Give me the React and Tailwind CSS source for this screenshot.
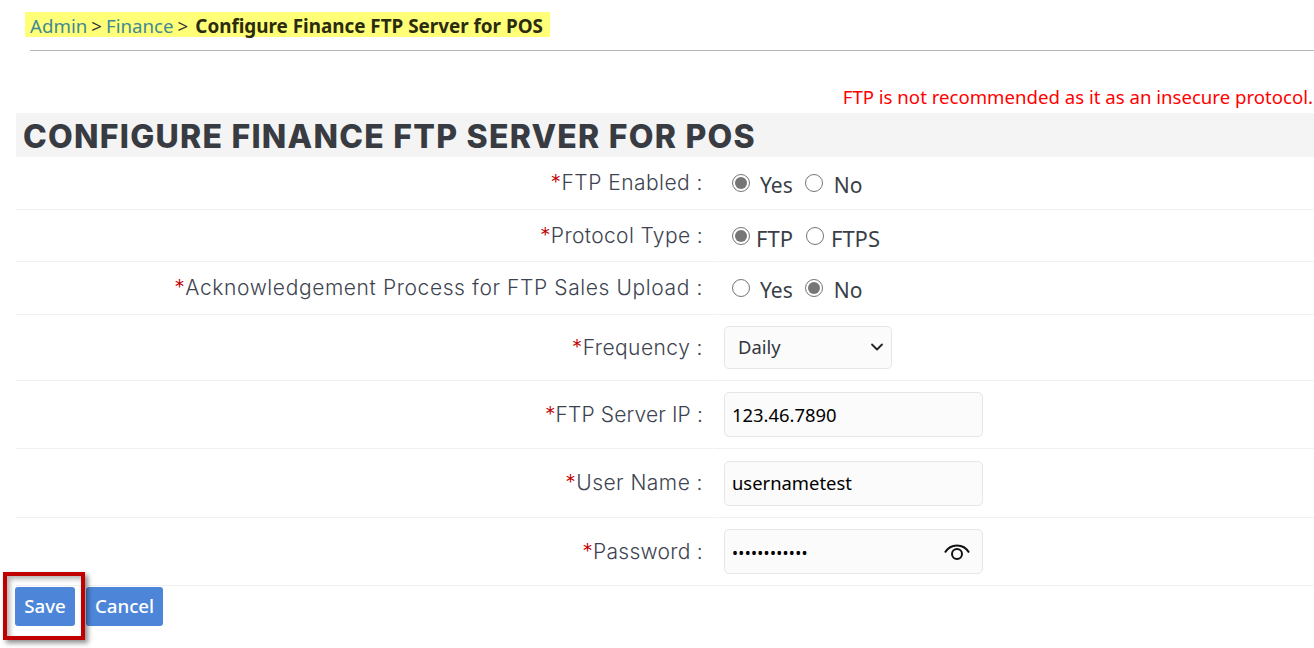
import React from "react";
import { ChevronDown } from "lucide-react";

const sans = "font-['Noto_Sans','Open_Sans',sans-serif]";

function Radio({ checked }) {
  return (
    <span className="flex h-[18px] w-[18px] shrink-0 items-center justify-center rounded-full border border-[#767676] bg-white">
      {checked && <span className="h-3 w-3 rounded-full bg-[#767676]" />}
    </span>
  );
}

function Row({ label, height, tracking, children }) {
  return (
    <div className="flex" style={{ height }}>
      <div className={`flex w-[697px] items-center justify-end border-b border-[#f0f0f0] pr-[10px] font-['Inter',sans-serif] text-[21px] font-light text-[#3d4450] ${tracking}`}>
        <span className="text-[#c00000]">*</span>
        {label} :
      </div>
      <div className="ml-px flex flex-1 items-center border-b border-[#f0f0f0] pl-[10px]">{children}</div>
    </div>
  );
}

function RadioOption({ checked, text, textClass }) {
  return (
    <div className="flex items-center">
      <Radio checked={checked} />
      <span className={`${sans} mt-[6px] text-[21px] text-[#3a3f47] ${textClass}`}>{text}</span>
    </div>
  );
}

function Field({ children }) {
  return (
    <div className={`${sans} flex h-[45px] w-[259px] items-center justify-between rounded-[5px] border border-[#e6e6e6] bg-[#fbfbfb] pl-[7px] pr-[11px] text-[18.4px] text-black`}>
      {children}
    </div>
  );
}

export default function App() {
  return (
    <div className={`${sans} relative h-[648px] w-[1314px] overflow-hidden bg-white`}>
      <div className="pl-[25px] pt-3">
        <div className="flex h-[25px] w-[525px] items-center bg-[#ffff78] pl-[5px] pt-[3px] text-[18.7px] leading-6 text-[#33333a]">
          <span className="text-[#3f8a93]">Admin</span>
          <span className="mx-[4px]">&gt;</span>
          <span className="text-[#3f8a93]">Finance</span>
          <span className="mx-[4px]">&gt;</span>
          <span className="ml-[3px] text-[18.85px] font-bold text-[#2b2b10]">Configure Finance FTP Server for POS</span>
        </div>
      </div>
      <div className="ml-[30px] mt-[13px] h-px bg-[#b5b5b5]" />

      <div className="pr-px pt-[36px] text-right text-[18.62px] leading-5 text-[#ff0000]">
        FTP is not recommended as it as an insecure protocol.
      </div>

      <div className="ml-4">
        <div className="mt-[6px] flex h-[44px] items-center bg-[#f4f4f4] pl-[7px] pt-1 font-['Inter',sans-serif] text-[32px] font-extrabold tracking-[1.25px] text-[#383c42]">
          CONFIGURE FINANCE FTP SERVER FOR POS
        </div>

        <Row label="FTP Enabled" height={53} tracking="tracking-[0.47px]">
          <div className="flex items-center pl-2">
            <RadioOption checked text="Yes" textClass="ml-[10px] mr-[12px]" />
            <RadioOption text="No" textClass="ml-[11px]" />
          </div>
        </Row>
        <Row label="Protocol Type" height={52} tracking="tracking-[0.36px]">
          <div className="flex items-center pl-2">
            <RadioOption checked text="FTP" textClass="ml-[6px] mr-[13px] text-[22px]" />
            <RadioOption text="FTPS" textClass="ml-[7px] text-[22px]" />
          </div>
        </Row>
        <Row label="Acknowledgement Process for FTP Sales Upload" height={53} tracking="tracking-[0.6px]">
          <div className="flex items-center pl-2">
            <RadioOption text="Yes" textClass="ml-[10px] mr-[12px]" />
            <RadioOption checked text="No" textClass="ml-[11px]" />
          </div>
        </Row>
        <Row label="Frequency" height={66} tracking="tracking-[0.45px]">
          <div className="flex h-[43px] w-[168px] items-center justify-between rounded-[5px] border border-[#e6e6e6] bg-[#fbfbfb] pb-[2px] pl-[13px] pr-[4px] text-[18.4px] text-[#33373d]">
            Daily
            <ChevronDown size={20} strokeWidth={2.2} className="text-[#222]" />
          </div>
        </Row>
        <Row label="FTP Server IP" height={68} tracking="tracking-[0.13px]">
          <Field>123.46.7890</Field>
        </Row>
        <Row label="User Name" height={69} tracking="tracking-[0.45px]">
          <Field>usernametest</Field>
        </Row>
        <Row label="Password" height={68} tracking="tracking-[0.27px]">
          <Field>
            <span className="pt-[2px] text-[16px] tracking-[0.3px]">••••••••••••</span>
            <svg width="28" height="20" viewBox="0 0 28 20" fill="none" stroke="#111" strokeWidth="2">
              <path d="M2 10.5C5 5.5 9 3.5 14 3.5s9 2 12 7" />
              <circle cx="14" cy="12" r="5" />
            </svg>
          </Field>
        </Row>
      </div>

      <div className="ml-[15px] mt-px flex gap-[11px]">
        <button className="h-[39px] w-[60px] rounded-[3px] bg-[#4d86d9] text-[18.7px] font-medium text-white">Save</button>
        <button className="h-[39px] w-[77px] rounded-[3px] bg-[#4d86d9] text-[18.7px] font-medium text-white">Cancel</button>
      </div>

      {/* red callout drawn on top of the save button */}
      <div className="absolute left-[3px] top-[572px] h-[68px] w-[82px] border-[4px] border-[#c00000] shadow-[3px_3px_5px_rgba(0,0,0,0.45),inset_3px_3px_5px_rgba(0,0,0,0.3)]" />
    </div>
  );
}
